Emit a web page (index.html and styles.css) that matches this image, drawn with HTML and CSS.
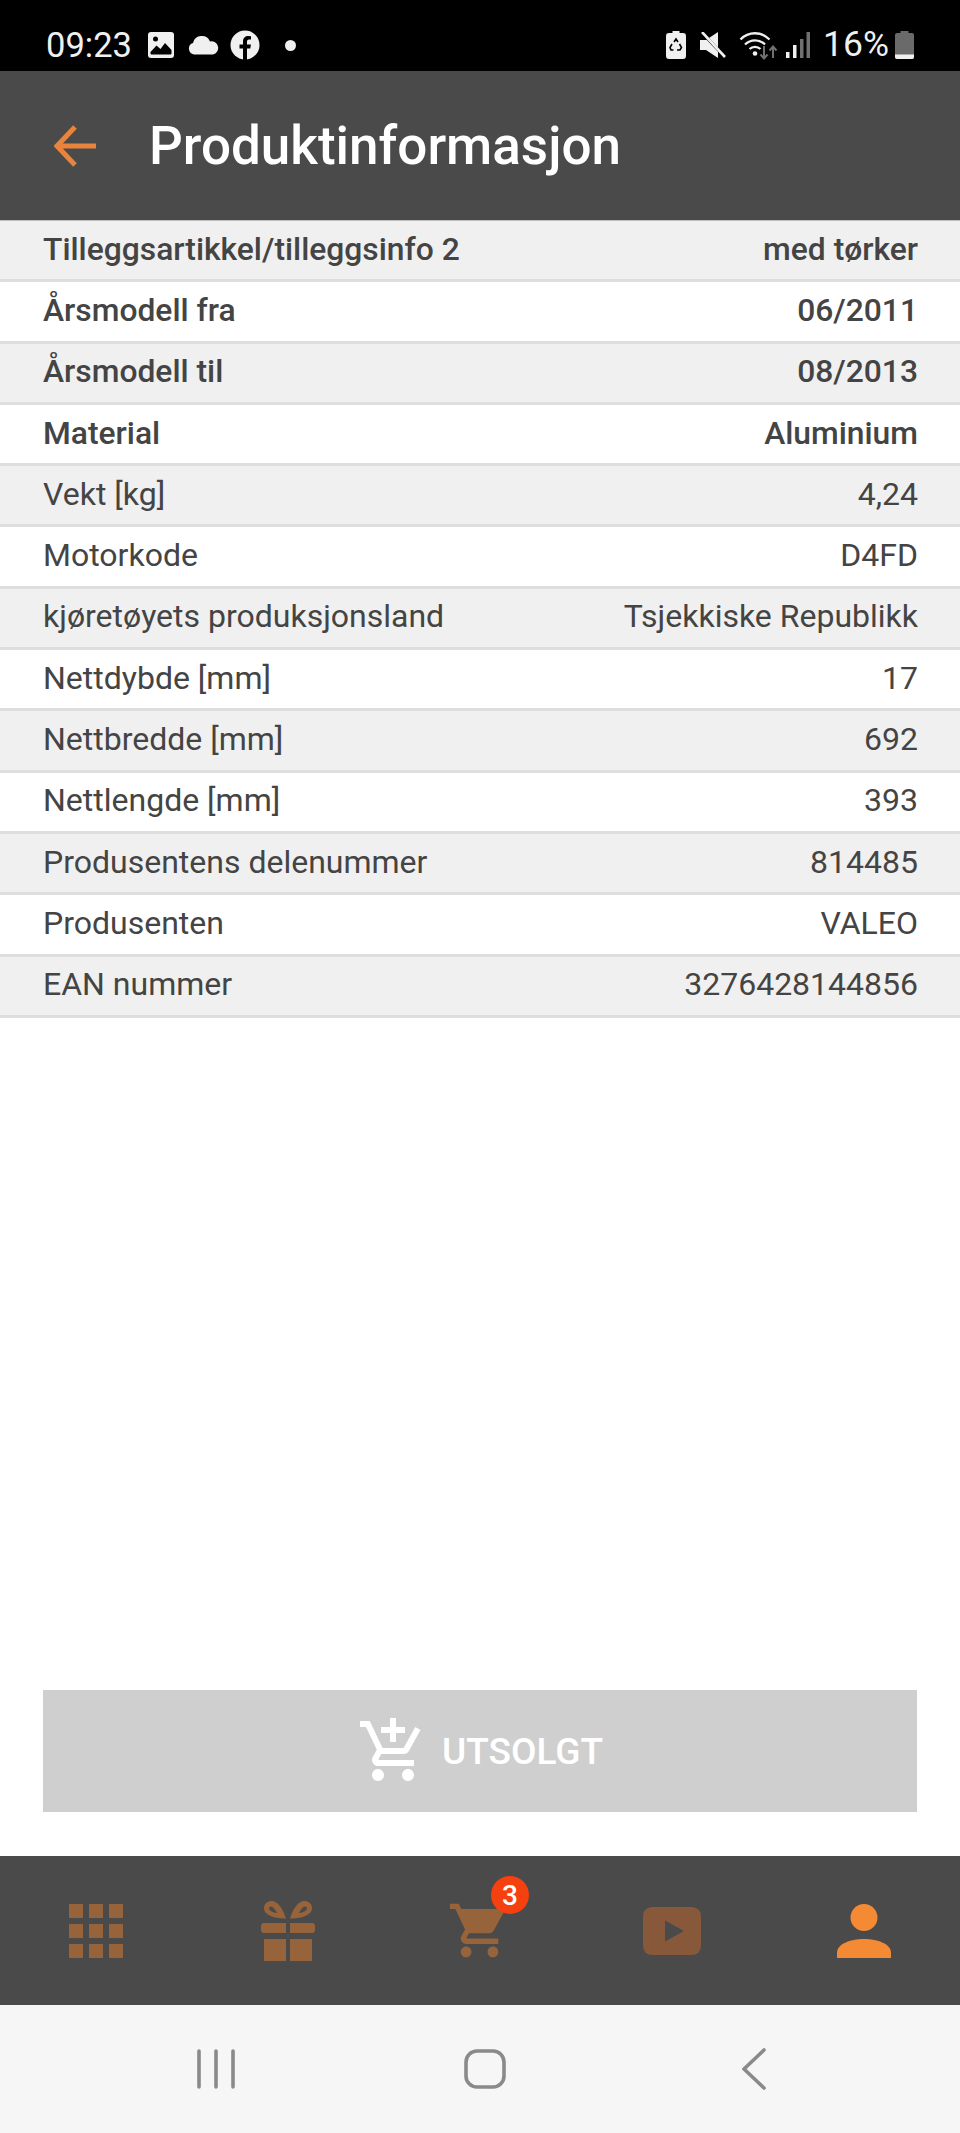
FILE: index.html
```html
<!DOCTYPE html>
<html lang="no">
<head>
    <meta charset="UTF-8">
    <meta name="viewport" content="width=device-width, initial-scale=1.0">
    <title>Produktinformasjon</title>
    <link rel="stylesheet" href="styles.css">
</head>
<body>
    <div class="status">
        <div class="status-left">
            <span class="time">09:23</span>
            <svg class="ic-image" viewBox="0 0 28 28"><rect x="1" y="1" width="26" height="26" rx="3" fill="#f0f0f0"/><path d="M3.500 21l6-6.500 4 3.500 4.500-6 6.500 7v3.500q0 1-1 1H4.500q-1 0-1-1z" fill="#000"/><circle cx="8.500" cy="8" r="2.500" fill="#000"/></svg>
            <svg class="ic-cloud" viewBox="0 0 32 20"><path d="M7 19.500a6 6 0 0 1-1-11.600A9 9 0 0 1 23 6.500a6.500 6.500 0 0 1 3 13z" fill="#f0f0f0"/></svg>
            <svg class="ic-fb" viewBox="0 0 30 30"><circle cx="15" cy="15" r="14.500" fill="#f0f0f0"/><path d="M13 30V18.500H9.500v-4H13v-3c0-3.600 2.200-5.500 5.300-5.500l2.700.2v3.400h-1.800c-1.700 0-2.200 1-2.200 2.100v2.800h3.900l-.6 4H17V30z" fill="#000"/></svg>
            <span class="dot"></span>
        </div>
        <div class="status-right">
            <svg class="ic-recycle" viewBox="0 0 20 28"><path d="M6.500 0h7v2H17q3 0 3 3v20q0 3-3 3H3q-3 0-3-3V5q0-3 3-3h3.500z" fill="#f0f0f0"/><path d="M8 11l2-3 2 3M13.500 13l2 3.500-1.500 2.500h-3M7.500 19H5l-1-2.500 2-3.500" fill="none" stroke="#000" stroke-width="1.600"/></svg>
            <svg class="ic-mute" viewBox="0 0 26 26"><path d="M0 8h6l12-8v26L6 18H0z" fill="#f0f0f0"/><path d="M0 -1.500l24 25.500" stroke="#000" stroke-width="3"/><path d="M2 0l23 25" stroke="#f0f0f0" stroke-width="2.600"/></svg>
            <svg class="ic-wifi" viewBox="0 0 39 30"><path d="M1.500 9.500a20 20 0 0 1 29 0M6 14.500a14 14 0 0 1 20 0M10.500 19a8 8 0 0 1 11 0" fill="none" stroke="#f0f0f0" stroke-width="2.300"/><circle cx="16" cy="23.500" r="2.300" fill="#f0f0f0"/><path d="M25 16v12m-3.500-3.500l3.500 4 3.500-4" fill="none" stroke="#707070" stroke-width="2"/><path d="M34 28V17m-3.500 3.500l3.500-4 3.500 4" fill="none" stroke="#707070" stroke-width="2"/></svg>
            <svg class="ic-signal" viewBox="0 0 24 26"><rect x="0" y="20" width="3.500" height="6" fill="#f0f0f0"/><rect x="7" y="13" width="3.500" height="13" fill="#f0f0f0"/><rect x="14" y="7" width="3.500" height="19" fill="#707070"/><rect x="20.500" y="0" width="3.500" height="26" fill="#707070"/></svg>
            <span class="percent">16%</span>
            <svg class="ic-battery" viewBox="0 0 19 28"><path d="M5.500 0h8v2H17q2 0 2 2v22q0 2-2 2H2q-2 0-2-2V4q0-2 2-2h3.500z" fill="#6a6a6a"/><path d="M0 23.500h19V26q0 2-2 2H2q-2 0-2-2z" fill="#f0f0f0"/></svg>
        </div>
    </div>

    <header class="topbar">
        <svg class="back-arrow" viewBox="0 0 44 42"><path d="M42 21H4M21 2L3 21l18 19" fill="none" stroke="#e8843c" stroke-width="5"/></svg>
        <h1 class="title">Produktinformasjon</h1>
    </header>

    <main class="content">
        <div class="specs">
            <div class="row strong"><span>Tilleggsartikkel/tilleggsinfo 2</span><span>med tørker</span></div>
            <div class="row strong"><span>Årsmodell fra</span><span>06/2011</span></div>
            <div class="row strong"><span>Årsmodell til</span><span>08/2013</span></div>
            <div class="row strong"><span>Material</span><span>Aluminium</span></div>
            <div class="row"><span>Vekt [kg]</span><span>4,24</span></div>
            <div class="row"><span>Motorkode</span><span>D4FD</span></div>
            <div class="row"><span>kjøretøyets produksjonsland</span><span>Tsjekkiske Republikk</span></div>
            <div class="row"><span>Nettdybde [mm]</span><span>17</span></div>
            <div class="row"><span>Nettbredde [mm]</span><span>692</span></div>
            <div class="row"><span>Nettlengde [mm]</span><span>393</span></div>
            <div class="row"><span>Produsentens delenummer</span><span>814485</span></div>
            <div class="row"><span>Produsenten</span><span>VALEO</span></div>
            <div class="row"><span>EAN nummer</span><span>3276428144856</span></div>
        </div>
        <div class="soldout">
            <svg class="add-cart" viewBox="0 0 24 24"><path d="M11 9h2V6h3V4h-3V1h-2v3H8v2h3v3zm-4 9c-1.100 0-1.990.9-1.990 2S5.900 22 7 22s2-.9 2-2-.9-2-2-2zm10 0c-1.100 0-1.990.9-1.990 2s.89 2 1.990 2 2-.9 2-2-.9-2-2-2zm-9.830-3.250l.03-.12.9-1.630h7.450c.75 0 1.410-.41 1.750-1.030l3.860-7.010L19.420 4h-.01l-1.100 2-2.760 5H8.530l-.13-.27L6.160 6l-.95-2-.94-2H1v2h2l3.600 7.590-1.350 2.450c-.16.28-.25.61-.25.96 0 1.100.9 2 2 2h12v-2H7.420c-.13 0-.25-.11-.25-.25z"/></svg>
            <span>UTSOLGT</span>
        </div>
    </main>

    <nav class="tabs">
        <div class="tab dim">
            <svg class="ic-grid" viewBox="0 0 54 54"><path d="M0 0h14v14H0zM20 0h14v14H20zM40 0h14v14H40zM0 20h14v14H0zM20 20h14v14H20zM40 20h14v14H40zM0 40h14v14H0zM20 40h14v14H20zM40 40h14v14H40z"/></svg>
        </div>
        <div class="tab dim">
            <svg class="ic-gift" viewBox="0 0 54 60"><path d="M3 22h22v10H3q-3 0-3-3v-4q0-3 3-3zM29 22h22q3 0 3 3v4q0 3-3 3H29zM3 38h22v22H3zM29 38h22v22H29z"/><path fill-rule="evenodd" d="M25 17.500C14 18 3 14 3 7.500 3 2 7 0 10.500 0 17 0 22 8 25 17.500zM10 5.500c-2 0-2.500 2-1.500 3.500 2 2 5 3 7.500 3C14.500 9 12 5.500 10 5.500zM29 17.500C40 18 51 14 51 7.500 51 2 47 0 43.500 0 37 0 32 8 29 17.500zM44 5.500c2 0 2.500 2 1.500 3.500-2 2-5 3-7.500 3C39.500 9 42 5.500 44 5.500z"/></svg>
        </div>
        <div class="tab dim">
            <svg class="ic-cart" viewBox="1 2 20.500 20"><path d="M7 18c-1.100 0-1.990.9-1.990 2S5.900 22 7 22s2-.9 2-2-.9-2-2-2zM1 2v2h2l3.600 7.590-1.350 2.450c-.16.28-.25.61-.25.96 0 1.100.9 2 2 2h12v-2H7.420c-.14 0-.25-.11-.25-.25l.03-.12.9-1.630h7.450c.75 0 1.410-.41 1.750-1.030l3.580-6.490c.08-.14.12-.31.12-.48 0-.55-.45-1-1-1H5.210l-.94-2H1zm16 16c-1.100 0-1.990.9-1.990 2s.89 2 1.990 2 2-.9 2-2-.9-2-2-2z"/></svg>
            <span class="badge">3</span>
        </div>
        <div class="tab dim">
            <svg class="ic-play" viewBox="0 0 58 48"><path fill-rule="evenodd" d="M10 0h38q10 0 10 10v28q0 10-10 10H10Q0 48 0 38V10Q0 0 10 0zM22 13.500v21L41 24z"/></svg>
        </div>
        <div class="tab active">
            <svg class="ic-person" viewBox="0 0 54 54"><circle cx="27" cy="13.500" r="13.500"/><path d="M0 54v-5c0-9 13-14 27-14s27 5 27 14v5z"/></svg>
        </div>
    </nav>

    <div class="sysnav">
        <svg class="ic-recents" viewBox="0 0 38 40"><path d="M2 2v36M19 2v36M36 2v36" stroke="#8a8a8a" stroke-width="3.600" stroke-linecap="round"/></svg>
        <svg class="ic-home" viewBox="0 0 42 40"><rect x="2" y="2" width="38" height="36" rx="11" fill="none" stroke="#8a8a8a" stroke-width="3.600"/></svg>
        <svg class="ic-sysback" viewBox="0 0 24 42"><path d="M22 2L2 21l20 19" fill="none" stroke="#8a8a8a" stroke-width="3.600" stroke-linecap="round"/></svg>
    </div>
</body>
</html>
```

FILE: styles.css
```css
*{margin: 0;padding: 0;box-sizing: border-box;}
html,body{width: 960px;height: 2133px;overflow: hidden;}
body{display: flex;flex-direction: column;background: #fff;font-family: Roboto, "Liberation Sans", sans-serif;color: #444;}

/* status bar */
.status{height: 71px;flex: none;background: #000;color: #f0f0f0;display: flex;justify-content: space-between;align-items: center;padding: 19px 46px 0 46px;}
.status svg{display: block;flex: none;}
.status-left,.status-right{display: flex;align-items: center;}
.time{font-size: 34.5px;width: 101px;line-height: 1;}
.ic-image{width: 28px;height: 28px;}
.ic-cloud{width: 32px;height: 20px;margin-left: 12px;}
.ic-fb{width: 30px;height: 30px;margin-left: 11px;}
.dot{width: 11px;height: 11px;border-radius: 50%;background: #f0f0f0;margin-left: 25px;}
.ic-recycle{width: 20px;height: 28px;}
.ic-mute{width: 26px;height: 26px;margin-left: 14px;}
.ic-wifi{width: 39px;height: 30px;margin-left: 13px;}
.ic-signal{width: 24px;height: 26px;margin-left: 8px;}
.percent{font-size: 35.5px;line-height: 1;margin-left: 13px;}
.ic-battery{width: 19px;height: 28px;margin-left: 6px;}

/* top bar */
.topbar{height: 150px;flex: none;background: #4a4a4a;border-bottom: 1px solid #bdbdbd;display: flex;align-items: center;padding-left: 54px;}
.back-arrow{width: 44px;height: 42px;}
.title{font-size: 53px;font-weight: 500;color: #fff;margin-left: 51px;}

/* spec table */
.content{flex: 1;display: flex;flex-direction: column;justify-content: space-between;}
.row{height: 61.3px;display: flex;justify-content: space-between;align-items: center;padding: 0 42px 3px 43px;font-size: 32px;border-bottom: 3px solid #dedede;}
.row:nth-child(odd){background: #f0f0f0;}
.strong{font-size: 31.8px;font-weight: 500;}

.soldout{height: 122px;margin: 0 43px 44px;background: #cfcfcf;color: #fff;display: flex;align-items: center;justify-content: center;font-size: 37px;font-weight: 500;}
.add-cart{width: 72px;height: 72px;fill: #fff;margin-right: 13px;}

/* bottom tabs */
.tabs{height: 149px;flex: none;background: #4a4a4a;display: grid;grid-template-columns: repeat(5, 1fr);}
.tab{position: relative;display: flex;align-items: center;justify-content: center;}
.dim svg{fill: #96633b;}
.active svg{fill: #f48a33;}
.ic-grid{width: 54px;height: 54px;}
.ic-gift{width: 54px;height: 60px;}
.ic-cart{width: 55px;height: 55px;margin-right: 6px;}
.dim .ic-play{width: 58px;height: 48px;fill: #87593a;}
.ic-person{width: 54px;height: 54px;}
.badge{position: absolute;top: 20px;left: 107px;width: 38px;height: 38px;border-radius: 50%;background: #f4410f;color: #fff;font-size: 28px;font-weight: 500;display: flex;align-items: center;justify-content: center;}

/* android nav */
.sysnav{height: 128px;flex: none;background: #f6f6f6;display: grid;grid-template-columns: 1fr 1fr 1fr;padding: 0 72px 0 81px;align-items: center;justify-items: center;}
.ic-recents{width: 38px;height: 40px;}
.ic-home{width: 42px;height: 40px;}
.ic-sysback{width: 24px;height: 42px;}
```
